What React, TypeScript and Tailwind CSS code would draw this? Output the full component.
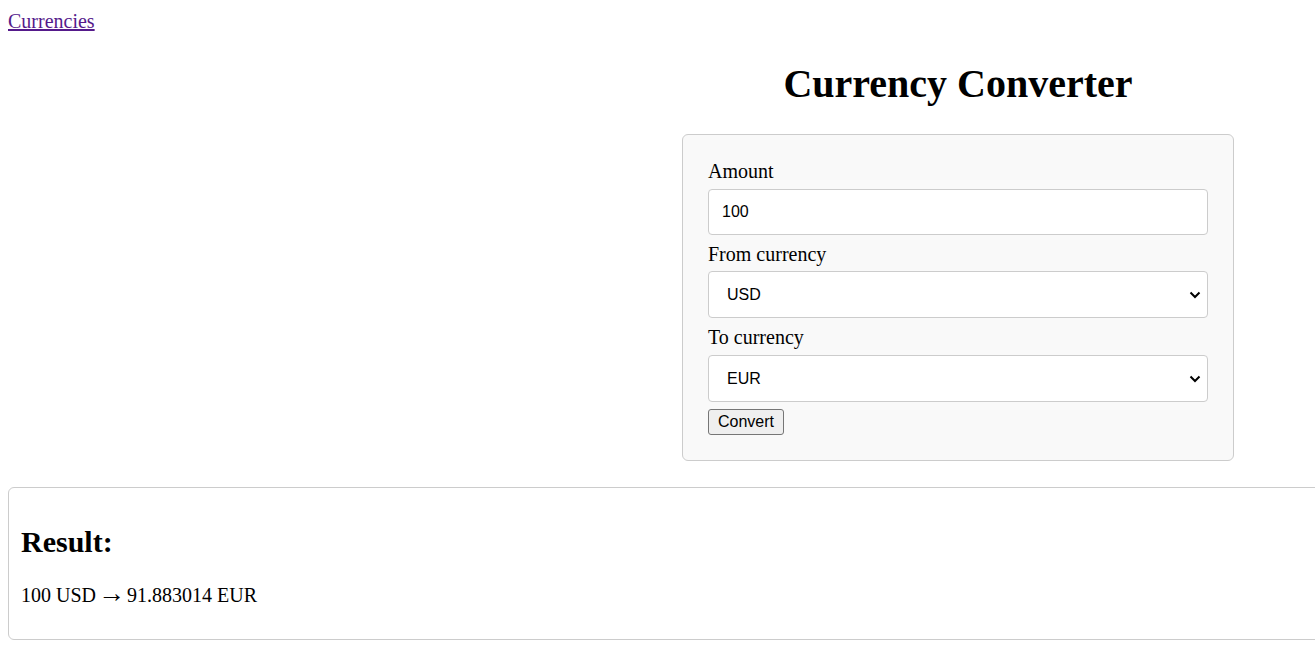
import React from "react";

function Chevron() {
  return (
    <svg width="12" height="8" viewBox="0 0 12 8" className="absolute right-[7px] top-1/2 -translate-y-1/2 pointer-events-none">
      <path d="M1.5 1.5 L6 6 L10.5 1.5" fill="none" stroke="#000" strokeWidth="2" />
    </svg>
  );
}

export default function App() {
  const serif = { fontFamily: '"Liberation Serif", "Times New Roman", serif' };
  const sans = { fontFamily: '"Liberation Sans", Arial, sans-serif' };
  return (
    <div className="w-[1315px] h-[645px] overflow-hidden bg-white text-black text-[20px]" style={serif}>
      <div className="pt-[10px] pl-[8px] h-[33px] leading-[23px]">
        <a href="#" className="text-[#551a8b] underline">Currencies</a>
      </div>
      <div className="flex">
        <div className="w-[601px] shrink-0" />
        <div className="w-[714px] shrink-0 flex flex-col items-center">
          <h1 className="mt-[28px] mb-[27px] text-[40px] font-bold leading-[46px]">Currency Converter</h1>
          <div className="w-[552px] border border-[#cccccc] rounded-[6px] bg-[#f9f9f9] p-[25px] flex flex-col items-stretch">
            <label className="leading-[23px] h-[23px]">Amount</label>
            <input
              defaultValue="100"
              className="mt-[6px] h-[46px] w-[500px] border border-[#cccccc] rounded-[4px] bg-white pl-[13px] text-[16px] outline-none"
              style={sans}
            />
            <label className="mt-[8px] leading-[23px] h-[23px]">From currency</label>
            <div className="relative mt-[5px]">
              <select
                defaultValue="USD"
                className="appearance-none h-[47px] w-[500px] border border-[#cccccc] rounded-[4px] bg-white pl-[18px] text-[16px] outline-none block"
                style={sans}
              >
                <option>USD</option>
                <option>EUR</option>
              </select>
              <Chevron />
            </div>
            <label className="mt-[8px] leading-[23px] h-[23px]">To currency</label>
            <div className="relative mt-[6px]">
              <select
                defaultValue="EUR"
                className="appearance-none h-[47px] w-[500px] border border-[#cccccc] rounded-[4px] bg-white pl-[18px] text-[16px] outline-none block"
                style={sans}
              >
                <option>USD</option>
                <option>EUR</option>
              </select>
              <Chevron />
            </div>
            <div className="mt-[7px] flex">
              <button
                className="h-[26px] px-[9px] border border-[#767676] rounded-[3px] bg-[#efefef] text-[16px] leading-[24px]"
                style={sans}
              >
                Convert
              </button>
            </div>
          </div>
        </div>
      </div>
      <div className="ml-[8px] mt-[26px] w-[1325px] border border-[#cccccc] rounded-[6px] px-[12px] pt-[37px] pb-[32px]">
        <h2 className="text-[30px] font-bold leading-[34px]">Result:</h2>
        <p className="mt-[25px] h-[23px] leading-[23px] whitespace-nowrap">
          100 USD <span className="text-[27px] leading-[0] -mx-[3px]">→</span> 91.883014 EUR
        </p>
      </div>
    </div>
  );
}
